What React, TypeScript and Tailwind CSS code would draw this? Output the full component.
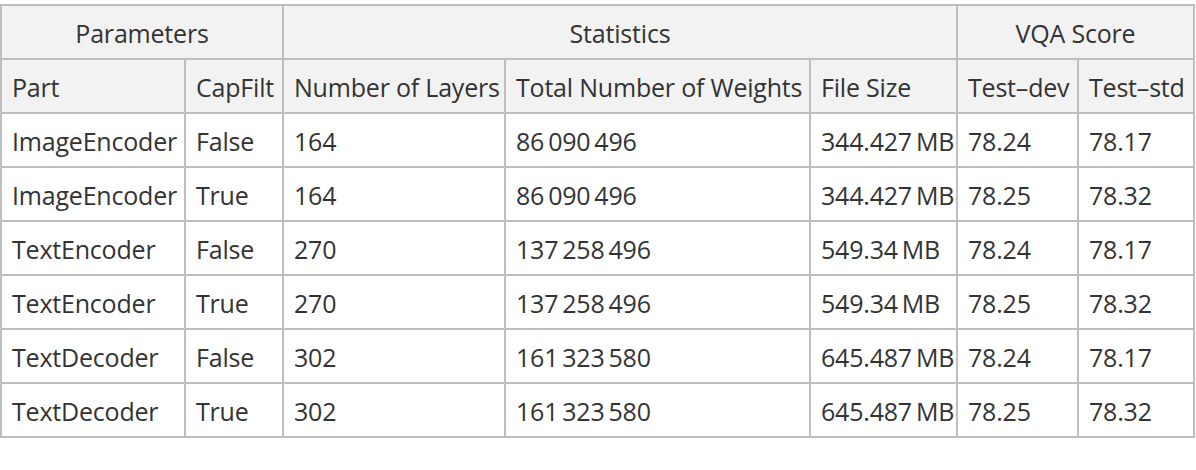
import React from "react";

const rows: string[][] = [
  ["ImageEncoder", "False", "164", "86\u2009090\u2009496", "344.427\u2009MB", "78.24", "78.17"],
  ["ImageEncoder", "True", "164", "86\u2009090\u2009496", "344.427\u2009MB", "78.25", "78.32"],
  ["TextEncoder", "False", "270", "137\u2009258\u2009496", "549.34\u2009MB", "78.24", "78.17"],
  ["TextEncoder", "True", "270", "137\u2009258\u2009496", "549.34\u2009MB", "78.25", "78.32"],
  ["TextDecoder", "False", "302", "161\u2009323\u2009580", "645.487\u2009MB", "78.24", "78.17"],
  ["TextDecoder", "True", "302", "161\u2009323\u2009580", "645.487\u2009MB", "78.25", "78.32"],
];

const subHeaders = ["Part", "CapFilt", "Number of Layers", "Total Number of Weights", "File Size", "Test\u2013dev", "Test\u2013std"];

export default function App() {
  return (
    <div className="w-[1196px] h-[470px] bg-white pt-[4px]" style={{ fontFamily: '"Open Sans", "Noto Sans", sans-serif' }}>
      <div className="grid grid-cols-[182px_96px_220px_303px_145px_119px_114px] auto-rows-[52px] gap-[2px] p-[2px] bg-[#bebebe] w-[1195px] text-[#333333] text-[25px] leading-none tracking-[-0.2px]">
        <div className="col-span-2 bg-[#f2f2f2] flex items-center justify-center whitespace-nowrap pt-[2px]">Parameters</div>
        <div className="col-span-3 bg-[#f2f2f2] flex items-center justify-center whitespace-nowrap pt-[2px]">Statistics</div>
        <div className="col-span-2 bg-[#f2f2f2] flex items-center justify-center whitespace-nowrap pt-[2px]">VQA Score</div>
        {subHeaders.map((h, i) => (
          <div key={"h" + i} className="bg-[#f2f2f2] flex items-center pl-[10px] pt-[2px] whitespace-nowrap overflow-hidden">{h}</div>
        ))}
        {rows.map((r, ri) =>
          r.map((c, ci) => (
            <div key={ri + "-" + ci} className="bg-white flex items-center pl-[10px] pt-[2px] whitespace-nowrap overflow-hidden">{c}</div>
          ))
        )}
      </div>
    </div>
  );
}
